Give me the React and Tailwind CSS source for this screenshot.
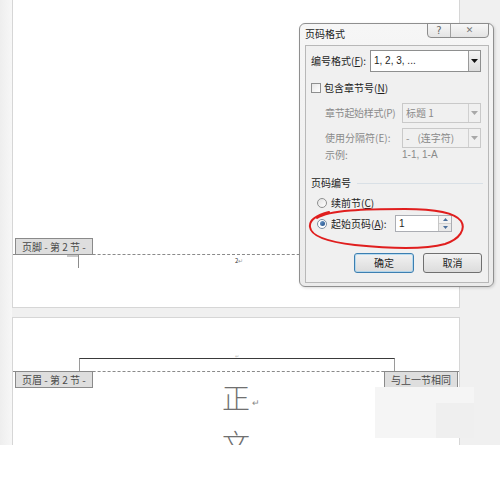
import React from 'react';

const cjk = { fontFamily: '"Noto Sans CJK SC", "Liberation Sans", sans-serif' };

const U = ({ children }) => <span className="underline underline-offset-1">{children}</span>;

const SectionTag = ({ children, className = '' }) => (
  <div className={`h-[17px] px-[6px] flex items-center border border-[#8a8a8a] bg-[#dedede] text-[10px] text-[#4a4a4a] leading-none ${className}`}>
    {children}
  </div>
);

const DropArrow = ({ disabled }) => (
  <div className={`w-[12px] h-full flex items-center justify-center border-l ${disabled ? 'border-[#d0d0d0]' : 'border-[#9a9a9a] bg-gradient-to-b from-[#f4f4f4] to-[#dcdcdc]'}`}>
    <svg width="7" height="4" viewBox="0 0 7 4">
      <path d="M0 0 H7 L3.5 4 Z" fill={disabled ? '#a8a8a8' : '#111'} />
    </svg>
  </div>
);

const PageFormatDialog = () => (
  <div className="absolute left-[299px] top-[23px] w-[195px] h-[264px] rounded-[6px] border border-[#8f8f8f] bg-gradient-to-b from-[#f6f6f6] to-[#ebebeb] shadow-[1px_1px_3px_rgba(0,0,0,0.15)]" style={cjk}>
    {/* title */}
    <div className="h-[21px] pl-[5px] pt-[3px] text-[10px] text-[#222] leading-[14px]">页码格式</div>
    <div className="absolute right-[4px] top-[-1px] w-[62px] h-[15px] flex border border-[#8c8c8c] rounded-b-[4px] bg-gradient-to-b from-[#f7f7f7] to-[#e4e4e4] overflow-hidden">
      <div className="w-[23px] h-full flex items-center justify-center border-r border-[#a0a0a0] text-[10px] text-[#666] leading-none" style={{ fontFamily: '"DejaVu Sans", sans-serif' }}>?</div>
      <div className="flex-1 h-full flex items-center justify-center text-[9px] text-[#777] leading-none" style={{ fontFamily: '"DejaVu Sans", sans-serif' }}>✕</div>
    </div>

    {/* content panel */}
    <div className="ml-[5px] mr-[4px] h-[238px] border border-[#b8b8b8] bg-[#f0f0f0] flex flex-col pl-[5px] pr-[5px] text-[10px] text-[#1e1e1e] leading-none">
      <div className="mt-[4px] h-[22px] flex items-center">
        <div className="w-[59px]">编号格式(<U>F</U>):</div>
        <div className="w-[111px] h-full flex border border-[#8e8f8f] bg-white">
          <div className="flex-1 pl-[3px] flex items-center text-[10px]" style={{ fontFamily: '"Liberation Sans", sans-serif' }}>1, 2, 3, ...</div>
          <DropArrow />
        </div>
      </div>

      <div className="mt-[8px] h-[16px] flex items-center gap-[3px]">
        <div className="w-[10px] h-[10px] border border-[#8e8f8f] bg-gradient-to-br from-[#e6e6e6] to-white" />
        <div>包含章节号(<U>N</U>)</div>
      </div>

      <div className="mt-[7px] h-[20px] flex items-center pl-[14px] text-[#8a8a8a]">
        <div className="w-[77px] tracking-[-0.3px]">章节起始样式(P)</div>
        <div className="w-[79px] h-full flex border border-[#c9c9c9]">
          <div className="flex-1 pl-[3px] flex items-center">标题 1</div>
          <DropArrow disabled />
        </div>
      </div>

      <div className="mt-[5px] h-[20px] flex items-center pl-[14px] text-[#8a8a8a]">
        <div className="w-[77px]">使用分隔符(E):</div>
        <div className="w-[79px] h-full flex border border-[#c9c9c9]">
          <div className="flex-1 pl-[3px] flex items-center gap-[8px]"><span>-</span><span>(连字符)</span></div>
          <DropArrow disabled />
        </div>
      </div>

      <div className="mt-[1px] h-[12px] flex items-center pl-[14px] text-[#8a8a8a]">
        <div className="w-[77px]">示例:</div>
        <div style={{ fontFamily: '"Liberation Sans", sans-serif' }}>1-1, 1-A</div>
      </div>

      <div className="mt-[15px] h-[14px] flex items-center">
        <div className="text-[#222]">页码编号</div>
        <div className="flex-1 ml-[6px] h-px bg-[#d9e0e6]" />
      </div>

      <div className="mt-[6px] h-[14px] flex items-center pl-[6px] gap-[4px]">
        <div className="w-[10px] h-[10px] rounded-full border border-[#8e8f8f] bg-gradient-to-br from-[#e2e2e2] to-white" />
        <div>续前节(<U>C</U>)</div>
      </div>

      <div className="mt-[5px] h-[17px] flex items-center pl-[6px]">
        <div className="w-[10px] h-[10px] rounded-full border border-[#7d8ea3] bg-white flex items-center justify-center">
          <div className="w-[5px] h-[5px] rounded-full bg-gradient-to-br from-[#6f9ccc] to-[#1f4f8a]" />
        </div>
        <div className="ml-[4px] w-[64px]">起始页码(<U>A</U>):</div>
        <div className="w-[57px] h-full flex border border-[#abadb3] bg-white">
          <div className="flex-1 pl-[3px] flex items-center" style={{ fontFamily: '"Liberation Sans", sans-serif' }}>1</div>
          <div className="w-[13px] h-full flex flex-col border-l border-[#c6c6c6]">
            <div className="flex-1 flex items-center justify-center border-b border-[#d0d0d0] bg-[#f3f3f3]">
              <svg width="5" height="3" viewBox="0 0 5 3"><path d="M0 3 L2.5 0 L5 3 Z" fill="#4a6f9c" /></svg>
            </div>
            <div className="flex-1 flex items-center justify-center bg-[#eaeaea]">
              <svg width="5" height="3" viewBox="0 0 5 3"><path d="M0 0 H5 L2.5 3 Z" fill="#4a6f9c" /></svg>
            </div>
          </div>
        </div>
      </div>

      <div className="mt-[21px] h-[20px] flex justify-end gap-[9px] pr-[1px]">
        <button className="w-[60px] h-full rounded-[3px] border border-[#3c7fb1] bg-gradient-to-b from-[#f2f2f2] to-[#dcdcdc] text-[10px] text-[#1e1e1e] shadow-[inset_0_0_0_1px_rgba(160,210,240,0.7)]" style={cjk}>确定</button>
        <button className="w-[59px] h-full rounded-[3px] border border-[#707070] bg-gradient-to-b from-[#f2f2f2] to-[#dcdcdc] text-[10px] text-[#1e1e1e]" style={cjk}>取消</button>
      </div>
    </div>
  </div>
);

export default function App() {
  return (
    <div className="relative w-[500px] h-[494px] overflow-hidden bg-white" style={cjk}>
      <div className="h-[445px] flex bg-[#f0f0f0]">
        <div className="w-[12px] h-full bg-gradient-to-r from-[#eeeeee] to-[#f7f7f7]" />

        <div className="w-[448px] h-full flex flex-col">
          {/* page 1 — footer area */}
          <div className="h-[308px] shrink-0 flex flex-col bg-white border-x border-b border-[#d6d6d6]">
            <div className="h-[238px] shrink-0" />
            <div className="flex border-b border-dashed border-[#8a8a8a]">
              <SectionTag className="ml-[2px] -mb-px">页脚 - 第 2 节 -</SectionTag>
            </div>
            <div className="relative flex-1">
              <div className="absolute left-[54px] top-0 w-[12px] h-[2px] bg-[#c8c8c8]" />
              <div className="absolute left-[65px] top-0 w-px h-[13px] bg-[#8c8c8c]" />
              <div className="absolute left-[222px] top-[3px] text-[6px] leading-none text-[#333]">2<span className="text-[#999]">↵</span></div>
            </div>
          </div>

          {/* page 2 — header area */}
          <div className="mt-[9px] flex-1 min-h-0 overflow-hidden flex flex-col bg-white border-x border-t border-[#d6d6d6]">
            <div className="h-[40px] shrink-0 relative">
              <div className="absolute left-[222px] top-[35px] text-[5px] text-[#bbb] leading-none">↵</div>
            </div>
            <div className="ml-[66px] w-[316px] h-[13px] shrink-0 border-t border-[#3a3a3a] border-x border-x-[#9a9a9a]" />
            <div className="shrink-0 border-t border-dashed border-[#8a8a8a] grid grid-cols-[1fr_auto_1fr]">
              <div className="justify-self-start">
                <SectionTag className="ml-[2px] -mt-px">页眉 - 第 2 节 -</SectionTag>
              </div>
              <div className="flex flex-col items-center pt-[2px] text-[28px] font-light text-[#707070] leading-[46px]">
                <div className="relative">
                  正
                  <span className="absolute left-[30px] top-[6px] text-[9px] text-[#888]">↵</span>
                </div>
                <div>文</div>
              </div>
              <div className="justify-self-end">
                <SectionTag className="mr-[1px] -mt-px">与上一节相同</SectionTag>
              </div>
            </div>
          </div>
        </div>

        <div className="flex-1 h-full bg-[#f0f0f0]" />
      </div>

      {/* screen capture leftovers */}
      <div className="absolute left-[375px] top-[387px] w-[99px] h-[51px] bg-[#f5f5f5]" />
      <div className="absolute left-[436px] top-[403px] w-[38px] h-[35px] bg-[#efefef]" />
      <div className="absolute left-0 top-[445px] w-[500px] h-[49px] bg-white" />

      <PageFormatDialog />

      {/* red hand-drawn mark */}
      <svg className="absolute left-[305px] top-[205px]" width="162" height="47" viewBox="0 0 162 47">
        <path
          d="M12 13 C 24 5, 60 4, 100 4 C 132 4, 150 8, 156 16 C 161 24, 155 34, 140 39 C 118 45, 80 43, 50 40 C 24 37, 6 32, 5 22 C 4 15, 12 10, 24 7"
          fill="none"
          stroke="#e01e1e"
          strokeWidth="2"
          strokeLinecap="round"
        />
      </svg>
    </div>
  );
}
